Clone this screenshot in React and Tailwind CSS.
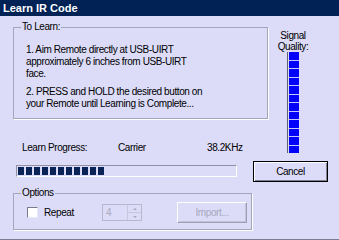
import React from "react";

const signalBlocks = Array.from({ length: 12 });
const progressBlocks = Array.from({ length: 11 });

const App = () => {
  return (
    <div className="w-[339px] h-[240px] overflow-hidden flex flex-col bg-[#dcdcf8] text-black font-['Liberation_Sans',Arial,sans-serif] text-[10px] tracking-[-0.4px] leading-[12px] border-b border-[#7c7c90]">
      {/* title bar */}
      <div className="h-[16px] shrink-0 bg-[#002255] text-white font-bold text-[11px] tracking-normal leading-[16px] pl-[3px]">
        Learn IR Code
      </div>

      {/* instructions + signal quality */}
      <div className="flex pl-[13px] pt-[5px]">
        <div className="w-[255px] flex flex-col">
          <fieldset className="h-[98px] border border-[#a4a4bc] shadow-[1px_1px_0_#ffffff] pl-[7px] pr-[4px]">
            <legend className="px-[1px] leading-[12px]">To Learn:</legend>
            <div className="pl-[5px] mt-[11px]">
              <p>1. Aim Remote directly at USB-UIRT</p>
              <p>approximately 6 inches from USB-UIRT</p>
              <p>face.</p>
              <p className="mt-[6px]">2. PRESS and HOLD the desired button on</p>
              <p>your Remote until Learning is Complete...</p>
            </div>
          </fieldset>
          <div className="flex mt-[23px] pl-[9px]">
            <span className="w-[96px]">Learn Progress:</span>
            <span className="w-[89px]">Carrier</span>
            <span>38.2KHz</span>
          </div>
        </div>

        <div className="w-[38px] ml-[6px] flex flex-col items-center">
          <span className="mt-[9px] leading-[11px]">Signal</span>
          <span className="leading-[11px]">Quality:</span>
          <div className="flex h-[101px]">
            <div className="w-[1px] bg-[#606070]" />
            <div className="w-[10px] ml-[1px] flex flex-col gap-[1px] bg-[#c4c4ff]">
              {signalBlocks.map((_, i) => (
                <div key={i} className="flex-1 bg-[#0000ff]" />
              ))}
            </div>
          </div>
        </div>
      </div>

      {/* progress bar + cancel */}
      <div className="flex items-start pl-[16px] mt-[7px]">
        <div className="w-[221px] h-[12px] mt-[4px] border-t border-l border-[#9090a8] border-b border-r border-b-white border-r-white flex gap-[2px] pl-[1px] pt-[1px]">
          {progressBlocks.map((_, i) => (
            <div key={i} className="w-[6px] h-[8px] bg-[#0a2458]" />
          ))}
        </div>
        <button className="ml-[16px] w-[75px] h-[21px] border border-black shadow-[inset_1px_1px_0_#ffffff,inset_-1px_-1px_0_#808090] bg-[#dcdcf8] text-[10px] leading-[12px]">
          Cancel
        </button>
      </div>

      {/* options */}
      <div className="pl-[13px] mt-[5px]">
        <fieldset className="w-[239px] h-[43px] border border-[#a4a4bc] shadow-[1px_1px_0_#ffffff] pl-[7px]">
          <legend className="px-[1px] leading-[12px]">Options</legend>
          <div className="flex items-center h-[21px] mt-[3px]">
            <div className="ml-[6px] w-[11px] h-[11px] bg-white border-t border-l border-[#7a7a8a] border-b border-r border-b-[#e8e8f8] border-r-[#e8e8f8]" />
            <span className="ml-[6px] w-[58px]">Repeat</span>
            <div className="flex w-[40px] h-[17px] border border-[#b8b8cc] bg-[#dcdcf8]">
              <span className="flex-1 pl-[3px] leading-[15px] text-[#a8a8b8]">4</span>
              <div className="w-[14px] flex flex-col border-l border-[#c8c8dc]">
                <div className="flex-1 flex items-center justify-center border-b border-[#c8c8dc]">
                  <div className="w-0 h-0 border-l-[2px] border-r-[2px] border-b-[2px] border-l-transparent border-r-transparent border-b-[#a8a8b8]" />
                </div>
                <div className="flex-1 flex items-center justify-center">
                  <div className="w-0 h-0 border-l-[2px] border-r-[2px] border-t-[2px] border-l-transparent border-r-transparent border-t-[#a8a8b8]" />
                </div>
              </div>
            </div>
            <button className="ml-[35px] w-[70px] h-[21px] border border-[#a0a0b4] border-t-white border-l-white shadow-[inset_-1px_-1px_0_#c4c4d8] bg-[#dcdcf8] text-[10px] leading-[12px] text-[#a8a8bc]">
              Import...
            </button>
          </div>
        </fieldset>
      </div>
    </div>
  );
};

export default App;
